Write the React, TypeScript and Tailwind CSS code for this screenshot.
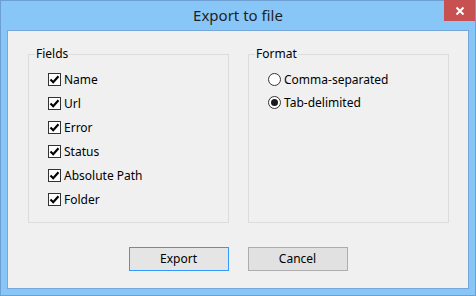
const fields = ["Name", "Url", "Error", "Status", "Absolute Path", "Folder"];

const formats = [
  { label: "Comma-separated", checked: false },
  { label: "Tab-delimited", checked: true },
];

function CheckBox() {
  return (
    <span className="flex h-[13px] w-[13px] shrink-0 items-center justify-center border border-[#333333] bg-white">
      <svg width="11" height="11" viewBox="0 0 11 11">
        <path d="M1.5 5.5 L4.2 8.2 L9.5 2.2" fill="none" stroke="#000" strokeWidth="2.2" />
      </svg>
    </span>
  );
}

function Radio({ checked }: { checked: boolean }) {
  return (
    <span className="flex h-[13px] w-[13px] shrink-0 items-center justify-center rounded-full border border-[#333333] bg-white">
      {checked && <span className="h-[7px] w-[7px] rounded-full bg-[#1a1a1a]" />}
    </span>
  );
}

export default function App() {
  return (
    <div
      className="flex h-[296px] w-[476px] flex-col border border-[#6d9fd3] bg-[#89c6f8] px-[6px] pb-[6px] text-[12px] text-black"
      style={{ fontFamily: '"Noto Sans", "Liberation Sans", sans-serif' }}
    >
      <div className="relative flex h-[29px] shrink-0 items-center justify-center">
        <span className="text-[15px] text-[#1f1f1f]">Export to file</span>
        <div className="absolute -right-[6px] top-[-1px] flex h-[21px] w-[31px] items-center justify-center bg-[#c75050]">
          <svg width="10" height="10" viewBox="0 0 10 10">
            <path d="M1.5 1.5 L8.5 8.5 M8.5 1.5 L1.5 8.5" stroke="#fff" strokeWidth="2" />
          </svg>
        </div>
      </div>

      <div className="flex flex-1 flex-col border border-[#77a7d8] bg-[#f0f0f0] pl-[20px] pt-[15px]">
        <div className="flex gap-[19px]">
          <fieldset className="h-[177px] w-[201px] border border-[#dcdcdc]">
            <legend className="ml-[6px] px-[1px] leading-[16px]">Fields</legend>
            <div className="flex flex-col gap-[11px] pl-[19px] pt-[11px]">
              {fields.map((name) => (
                <label key={name} className="flex h-[13px] items-center gap-[3px] leading-[13px]">
                  <CheckBox />
                  <span>{name}</span>
                </label>
              ))}
            </div>
          </fieldset>

          <fieldset className="h-[177px] w-[201px] border border-[#dcdcdc]">
            <legend className="ml-[6px] px-[1px] leading-[16px]">Format</legend>
            <div className="flex flex-col gap-[10px] pl-[19px] pt-[11px]">
              {formats.map((f) => (
                <label key={f.label} className="flex h-[13px] items-center gap-[3px] leading-[13px]">
                  <Radio checked={f.checked} />
                  <span>{f.label}</span>
                </label>
              ))}
            </div>
          </fieldset>
        </div>

        <div className="mt-[24px] flex justify-center gap-[19px] pr-[20px]">
          <button className="h-[24px] w-[100px] border border-[#3399ff] bg-[#e5e5e5] text-[12px]">
            Export
          </button>
          <button className="h-[24px] w-[100px] border border-[#adadad] bg-[#e1e1e1] text-[12px]">
            Cancel
          </button>
        </div>
      </div>
    </div>
  );
}
